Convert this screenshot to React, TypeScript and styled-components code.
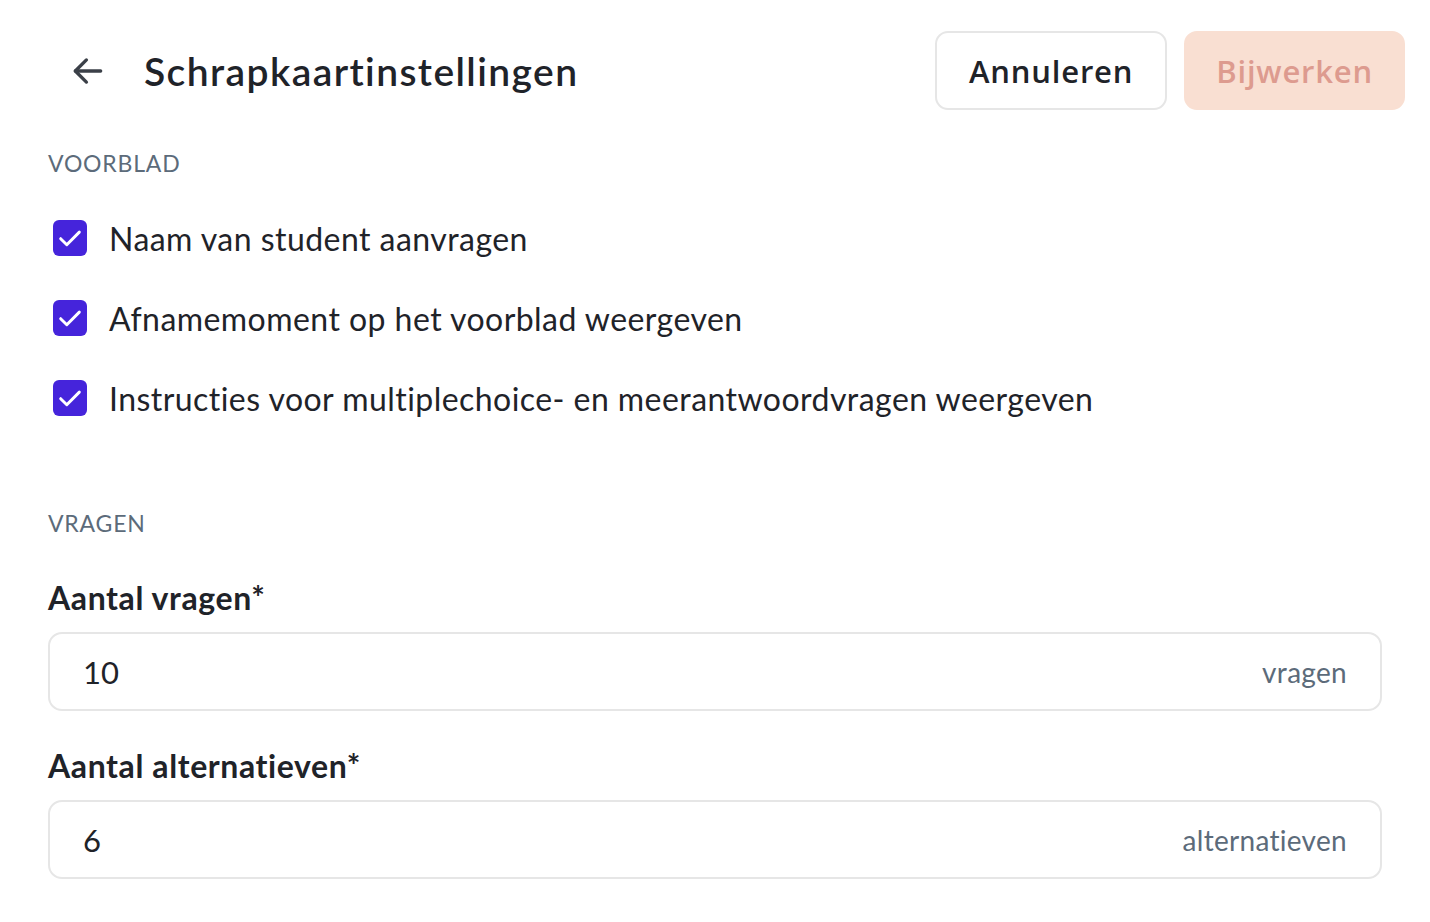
import React from "react";
import styled, { createGlobalStyle } from "styled-components";

const GlobalStyle = createGlobalStyle`
  * { box-sizing: border-box; }
  body {
    margin: 0;
    background: #ffffff;
    font-family: Lato, "Noto Sans", sans-serif;
    font-variant-ligatures: none;
    color: #1f2329;
  }
`;

const Page = styled.div`
  width: 1430px;
  padding: 31px 25px 40px 48px;
`;

const Header = styled.header`
  display: flex;
  align-items: center;
  height: 79px;
`;

const BackButton = styled.button`
  display: flex;
  align-items: center;
  justify-content: center;
  width: 40px;
  height: 40px;
  margin-left: 20px;
  padding: 0;
  border: none;
  background: none;
  color: #3b4048;
  cursor: pointer;
`;

const Title = styled.h1`
  flex: 1;
  margin: 0 0 0 36px;
  font-size: 39px;
  font-weight: 600;
  letter-spacing: 1.4px;
  color: #1f2329;
`;

const Actions = styled.div`
  display: flex;
  gap: 17px;
`;

type ActionButtonProps = {
  primary?: boolean;
};

const ActionButton = styled.button<ActionButtonProps>`
  height: 79px;
  padding: 0 ${(p) => (p.primary ? 30 : 32)}px;
  border-radius: 13px;
  border: 2px solid ${(p) => (p.primary ? "#f9dfd2" : "#e6e6e6")};
  background: ${(p) => (p.primary ? "#f9dfd2" : "#ffffff")};
  color: ${(p) => (p.primary ? "#dd9b8f" : "#1f2329")};
  font-family: "Open Sans", sans-serif;
  font-size: 31px;
  font-weight: 600;
  letter-spacing: 0.8px;
  cursor: pointer;
`;

const SectionLabel = styled.div<{ top: number }>`
  margin-top: ${(p) => p.top}px;
  font-size: 23px;
  line-height: 26px;
  letter-spacing: 0.8px;
  color: #5c6b7a;
  text-transform: uppercase;
`;

const CheckList = styled.div`
  display: flex;
  flex-direction: column;
  gap: 44px;
  margin-top: 44px;
`;

const CheckRow = styled.label`
  display: flex;
  align-items: center;
  gap: 22px;
  height: 36px;
  padding-left: 5px;
  font-size: 32px;
  letter-spacing: 0.45px;
  color: #1f2329;
`;

const CheckBox = styled.span`
  display: flex;
  align-items: center;
  justify-content: center;
  width: 34px;
  height: 36px;
  border-radius: 6px;
  background: #4524db;
  flex-shrink: 0;
`;

const Field = styled.div<{ top: number }>`
  margin-top: ${(p) => p.top}px;
  width: 1334px;
`;

const FieldLabel = styled.div`
  height: 36px;
  line-height: 36px;
  font-size: 32px;
  font-weight: 700;
  letter-spacing: 0.6px;
  color: #1f2329;
  margin-bottom: 16px;
`;

const InputBox = styled.div`
  display: flex;
  align-items: center;
  justify-content: space-between;
  height: 79px;
  padding: 0 33px;
  border: 2px solid #e6e6e6;
  border-radius: 14px;
`;

const Value = styled.span`
  font-size: 31px;
  color: #1f2329;
`;

const Suffix = styled.span`
  font-size: 28px;
  letter-spacing: 0.3px;
  color: #5c6b7a;
`;

const options = [
  "Naam van student aanvragen",
  "Afnamemoment op het voorblad weergeven",
  "Instructies voor multiplechoice- en meerantwoordvragen weergeven",
];

const ArrowLeft = () => (
  <svg width="38" height="38" viewBox="0 0 24 24" fill="none" stroke="currentColor" strokeWidth="2.1" strokeLinecap="round" strokeLinejoin="round">
    <path d="M20 12H4" />
    <path d="M11 19l-7-7 7-7" />
  </svg>
);

const Check = () => (
  <svg width="32" height="32" viewBox="0 0 24 24" fill="none" stroke="#ffffff" strokeWidth="2.2" strokeLinecap="round" strokeLinejoin="round">
    <path d="M5 12.5l4.6 4.6L19 7.6" />
  </svg>
);

export default function App() {
  return (
    <>
      <GlobalStyle />
      <Page>
        <Header>
          <BackButton aria-label="Terug">
            <ArrowLeft />
          </BackButton>
          <Title>Schrapkaartinstellingen</Title>
          <Actions>
            <ActionButton>Annuleren</ActionButton>
            <ActionButton primary>Bijwerken</ActionButton>
          </Actions>
        </Header>

        <SectionLabel top={40}>Voorblad</SectionLabel>
        <CheckList>
          {options.map((o) => (
            <CheckRow key={o}>
              <CheckBox>
                <Check />
              </CheckBox>
              {o}
            </CheckRow>
          ))}
        </CheckList>

        <SectionLabel top={94}>Vragen</SectionLabel>
        <Field top={44}>
          <FieldLabel>Aantal vragen*</FieldLabel>
          <InputBox>
            <Value>10</Value>
            <Suffix>vragen</Suffix>
          </InputBox>
        </Field>
        <Field top={37}>
          <FieldLabel>Aantal alternatieven*</FieldLabel>
          <InputBox>
            <Value>6</Value>
            <Suffix>alternatieven</Suffix>
          </InputBox>
        </Field>
      </Page>
    </>
  );
}
